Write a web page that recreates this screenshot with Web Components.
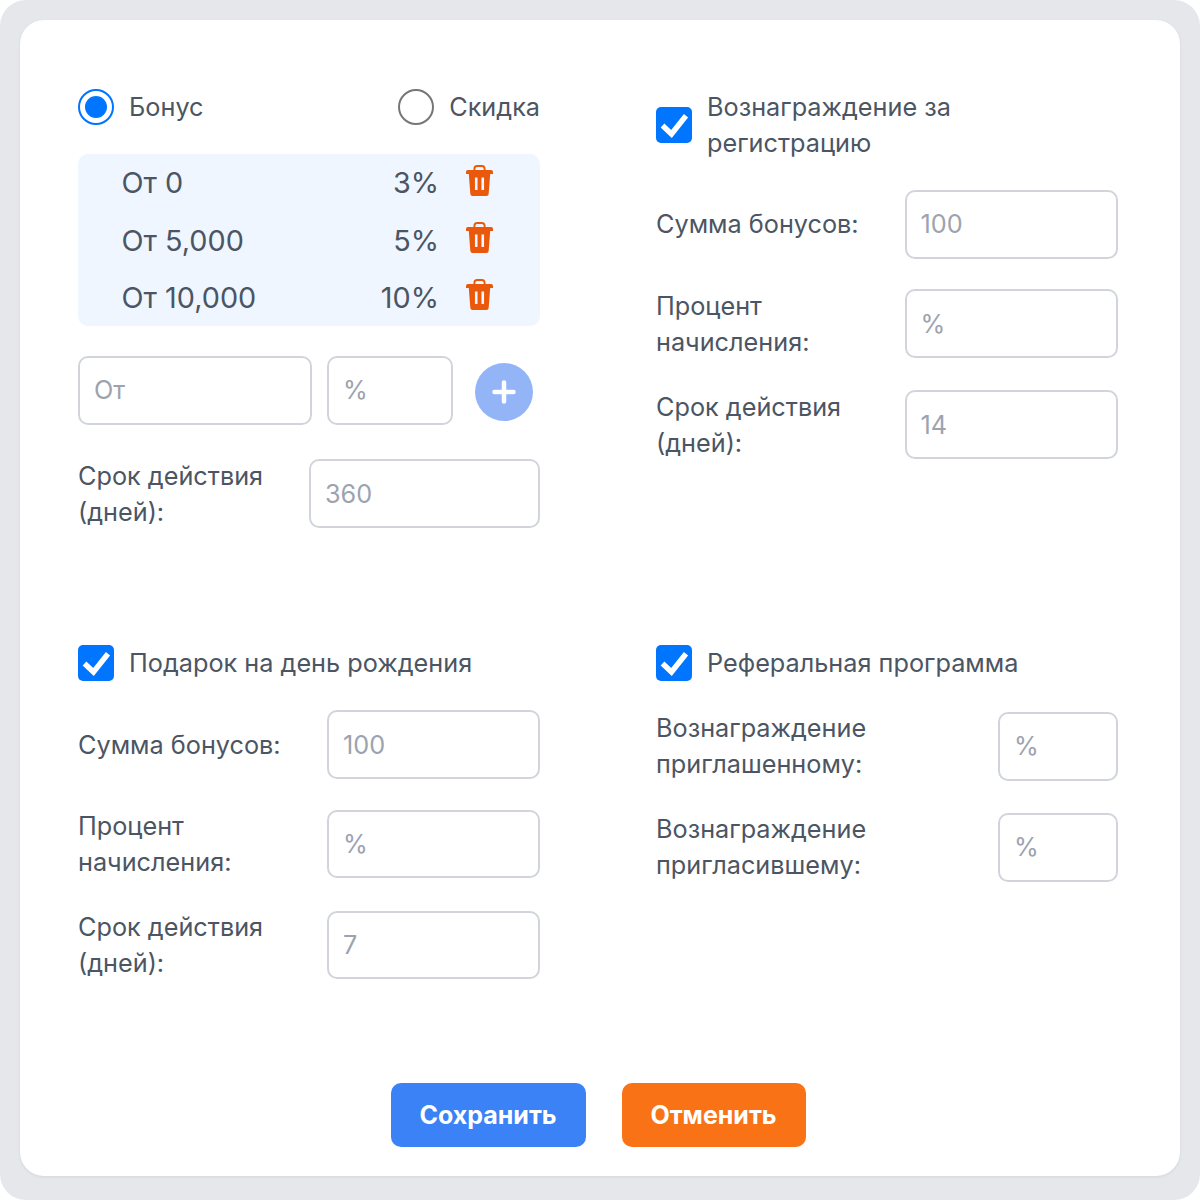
<!DOCTYPE html>
<html lang="ru">

<head>
  <meta charset="UTF-8">
  <title>Бонусная программа</title>
  <style>
    body {
      margin: 0;
      font-family: Inter, "Noto Sans", sans-serif;
      color: #4b5563;
      background: #fff;
    }
  </style>
</head>

<body>
  <settings-card>
    <form-section>
      <option-row slot="head" class="split">
        <radio-option checked>Бонус</radio-option>
        <radio-option>Скидка</radio-option>
      </option-row>
      <tier-list>
        <tier-row from="От 0" percent="3%"></tier-row>
        <tier-row from="От 5,000" percent="5%"></tier-row>
        <tier-row from="От 10,000" percent="10%"></tier-row>
      </tier-list>
      <tier-form></tier-form>
      <field-row label="Срок действия (дней):" value="360" width="231" style="margin-top:4px"></field-row>
    </form-section>

    <form-section>
      <check-option slot="head">Вознаграждение за<br>регистрацию</check-option>
      <field-row label="Сумма бонусов:" value="100" width="213.5"></field-row>
      <field-row label="Процент начисления:" value="%" width="213.5"></field-row>
      <field-row label="Срок действия (дней):" value="14" width="213.5"></field-row>
    </form-section>

    <form-section class="lower">
      <check-option slot="head">Подарок на день рождения</check-option>
      <field-row label="Сумма бонусов:" value="100"></field-row>
      <field-row label="Процент начисления:" value="%"></field-row>
      <field-row label="Срок действия (дней):" value="7"></field-row>
    </form-section>

    <form-section class="lower">
      <check-option slot="head">Реферальная программа</check-option>
      <field-row label="Вознаграждение приглашенному:" value="%" width="120"></field-row>
      <field-row label="Вознаграждение пригласившему:" value="%" width="120"></field-row>
    </form-section>

    <app-button slot="actions" color="#3b82f6" width="195">Сохранить</app-button>
    <app-button slot="actions" color="#f97316" width="184">Отменить</app-button>
  </settings-card>

  <script>
    const TEXT_SIZE = '25.25px';

    class BaseElement extends HTMLElement {
      constructor() {
        super();
        this.attachShadow({ mode: 'open' });
      }

      connectedCallback() {
        this.shadowRoot.innerHTML = this.render();
      }
    }

    class SettingsCard extends BaseElement {
      render() {
        return `
      <style>
        :host { display: block; width: 1200px; height: 1200px; }
        .frame {
          box-sizing: border-box;
          height: 100%;
          padding: 20px 20px 24px;
          background: #e5e7eb;
          border-radius: 26px;
        }
        .card {
          box-sizing: border-box;
          height: 100%;
          padding: 69px 62px 29px 58px;
          background: #fff;
          border-radius: 24px;
          box-shadow: 0 1px 3px rgba(0, 0, 0, .08);
          display: flex;
          flex-direction: column;
          justify-content: space-between;
        }
        .grid {
          display: grid;
          grid-template-columns: 462px 462px;
          column-gap: 116px;
          grid-template-rows: 441px auto;
          row-gap: 115px;
        }
        .actions { display: flex; justify-content: center; gap: 36px; }
      </style>
      <div class="frame">
        <div class="card">
          <div class="grid"><slot></slot></div>
          <div class="actions"><slot name="actions"></slot></div>
        </div>
      </div>
    `;
      }
    }

    class FormSection extends BaseElement {
      render() {
        return `
      <style>
        :host { display: flex; flex-direction: column; gap: 29px; }
        :host(.lower) .head { margin-bottom: .4px; }
      </style>
      <div class="head"><slot name="head"></slot></div>
      <slot></slot>
    `;
      }
    }

    class OptionRow extends BaseElement {
      render() {
        return `
      <style>
        :host { display: flex; justify-content: space-between; align-items: center; }
      </style>
      <slot></slot>
    `;
      }
    }

    class RadioOption extends BaseElement {
      render() {
        const on = this.hasAttribute('checked');
        return `
      <style>
        :host {
          display: inline-flex;
          align-items: center;
          gap: 15px;
          font-size: ${TEXT_SIZE};
          line-height: 36px;
        }
        .mark {
          box-sizing: border-box;
          width: 36px;
          height: 36px;
          padding: 5px;
          border-radius: 50%;
          border: 2px solid ${on ? '#0075ff' : '#767676'};
        }
        .dot { height: 100%; border-radius: 50%; background: ${on ? '#0075ff' : 'transparent'}; }
      </style>
      <div class="mark"><div class="dot"></div></div>
      <span><slot></slot></span>
    `;
      }
    }

    class CheckOption extends BaseElement {
      render() {
        return `
      <style>
        :host {
          display: flex;
          align-items: center;
          gap: 15px;
          font-size: ${TEXT_SIZE};
          line-height: 36px;
        }
        svg { flex: none; display: block; }
      </style>
      <svg width="36" height="36" viewBox="0 0 36 36">
        <rect width="36" height="36" rx="5" fill="#0075ff"/>
        <path d="M6.5 18.5l9 8.5L30 8.8" fill="none" stroke="#fff" stroke-width="5.4"/>
      </svg>
      <span><slot></slot></span>
    `;
      }
    }

    class TierList extends BaseElement {
      render() {
        return `
      <style>
        :host {
          display: grid;
          grid-auto-rows: 57.4px;
          background: #eff6ff;
          border-radius: 10px;
        }
      </style>
      <slot></slot>
    `;
      }
    }

    class TierRow extends BaseElement {
      render() {
        return `
      <style>
        :host {
          display: grid;
          grid-template-columns: 1fr auto 27px;
          align-items: center;
          column-gap: 27px;
          padding: 0 47px 0 43.5px;
          font-size: 28.8px;
        }
        svg { display: block; margin-bottom: 5px; }
      </style>
      <span>${this.getAttribute('from')}</span>
      <span>${this.getAttribute('percent')}</span>
      <svg width="27" height="31" viewBox="0 0 29 31" preserveAspectRatio="none" fill="#ea580c">
        <path d="M9 6V4a3 3 0 0 1 3-3h5a3 3 0 0 1 3 3v2" fill="none" stroke="#ea580c" stroke-width="2"/>
        <path d="M2 5h25a2 2 0 0 1 2 2v2H0V7a2 2 0 0 1 2-2z"/>
        <path fill-rule="evenodd" d="M3 9h23l-1.6 19.5a2.6 2.6 0 0 1-2.6 2.5H7.2a2.6 2.6 0 0 1-2.6-2.5zM9.6 12.5v12.5h2.8V12.5zM16.6 12.5v12.5h2.8V12.5z"/>
      </svg>
    `;
      }
    }

    class TextField extends BaseElement {
      render() {
        return `
      <style>
        :host {
          display: flex;
          align-items: center;
          box-sizing: border-box;
          height: 68.5px;
          padding: 0 14px;
          border: 2px solid #d1d5db;
          border-radius: 10px;
          background: #fff;
          color: #9ca3af;
          font-size: ${TEXT_SIZE};
        }
      </style>
      <slot></slot>
    `;
      }
    }

    class FieldRow extends BaseElement {
      render() {
        const width = this.getAttribute('width') || 213;
        return `
      <style>
        :host {
          display: grid;
          grid-template-columns: 1fr ${width}px;
          align-items: center;
          font-size: ${TEXT_SIZE};
          line-height: 36px;
        }
        span { max-width: 228px; }
      </style>
      <span>${this.getAttribute('label')}</span>
      <text-field>${this.getAttribute('value')}</text-field>
    `;
      }
    }

    class TierForm extends BaseElement {
      render() {
        return `
      <style>
        :host {
          display: grid;
          grid-template-columns: 234px 126px 58px;
          column-gap: 15px;
          align-items: center;
          padding-top: 1px;
        }
        button {
          grid-column: 3;
          margin: 4px 0 0 7px;
          padding: 0;
          width: 58px;
          height: 58px;
          border: 0;
          border-radius: 50%;
          background: #93b4f7;
          display: grid;
          place-items: center;
        }
        svg { display: block; }
      </style>
      <text-field>От</text-field>
      <text-field>%</text-field>
      <button aria-label="Добавить">
        <svg width="24" height="24" viewBox="0 0 24 24">
          <path d="M12 2.5v19M2.5 12h19" stroke="#fff" stroke-width="4.5" stroke-linecap="round"/>
        </svg>
      </button>
    `;
      }
    }

    class AppButton extends BaseElement {
      render() {
        return `
      <style>
        :host {
          display: flex;
          align-items: center;
          justify-content: center;
          width: ${this.getAttribute('width')}px;
          height: 64px;
          border-radius: 10px;
          background: ${this.getAttribute('color')};
          color: #fff;
          font-size: 25px;
          font-weight: 700;
        }
      </style>
      <slot></slot>
    `;
      }
    }

    customElements.define('settings-card', SettingsCard);
    customElements.define('form-section', FormSection);
    customElements.define('option-row', OptionRow);
    customElements.define('radio-option', RadioOption);
    customElements.define('check-option', CheckOption);
    customElements.define('tier-list', TierList);
    customElements.define('tier-row', TierRow);
    customElements.define('text-field', TextField);
    customElements.define('field-row', FieldRow);
    customElements.define('tier-form', TierForm);
    customElements.define('app-button', AppButton);
  </script>
</body>

</html>
